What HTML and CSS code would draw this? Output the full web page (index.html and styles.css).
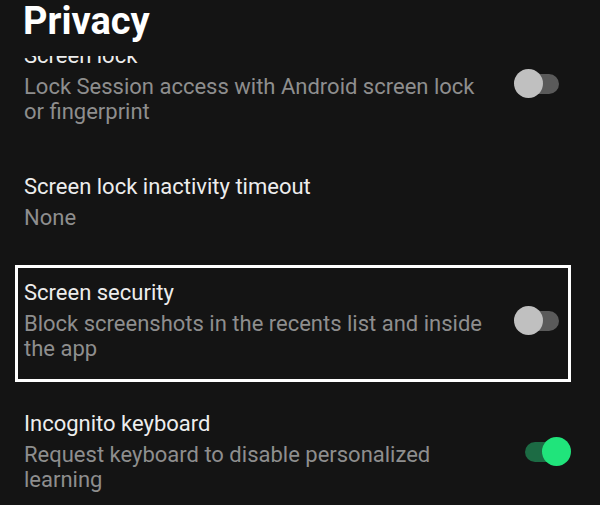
FILE: index.html
```html
<!DOCTYPE html>
<html lang="en">
<head>
    <meta charset="UTF-8">
    <meta name="viewport" content="width=device-width, initial-scale=1.0">
    <title>Privacy</title>
    <link rel="stylesheet" href="styles.css">
</head>
<body>
    <div class="screen">
        <header class="app-bar">
            <h1>Privacy</h1>
        </header>

        <div class="settings">
            <div class="setting">
                <div class="setting-text">
                    <div class="setting-title">Screen lock</div>
                    <div class="setting-summary">Lock Session access with Android screen lock or fingerprint</div>
                </div>
                <div class="switch"><span class="track"></span><span class="thumb"></span></div>
            </div>

            <div class="setting">
                <div class="setting-text">
                    <div class="setting-title">Screen lock inactivity timeout</div>
                    <div class="setting-summary">None</div>
                </div>
            </div>

            <div class="setting highlighted">
                <div class="setting-text">
                    <div class="setting-title">Screen security</div>
                    <div class="setting-summary">Block screenshots in the recents list and inside the app</div>
                </div>
                <div class="switch"><span class="track"></span><span class="thumb"></span></div>
            </div>

            <div class="setting">
                <div class="setting-text">
                    <div class="setting-title">Incognito keyboard</div>
                    <div class="setting-summary">Request keyboard to disable personalized learning</div>
                </div>
                <div class="switch on"><span class="track"></span><span class="thumb"></span></div>
            </div>
        </div>
    </div>
</body>
</html>
```

FILE: styles.css
```css
body {
    margin: 0;
    padding: 0;
    background-color: #141414;
    font-family: Roboto, "Liberation Sans", sans-serif;
    overflow: hidden;
}

.screen {
    position: relative;
    width: 600px;
    height: 505px;
    overflow: hidden;
}

/* header sits over the scrolled list */
.app-bar {
    position: absolute;
    top: 0;
    left: 0;
    right: 0;
    height: 56px;
    padding-top: 2px;
    box-sizing: border-box;
    background-color: #141414;
    z-index: 2;
}

.app-bar h1 {
    margin: 0;
    padding-left: 23px;
    font-size: 38px;
    line-height: 38px;
    font-weight: 700;
    color: #ffffff;
}

.settings {
    display: flex;
    flex-direction: column;
    padding-top: 18px;
}

.setting {
    position: relative;
    display: flex;
    align-items: center;
    gap: 28px;
    padding: 25px 29px 25px 24px;
}

.setting-text {
    flex: 1;
}

.setting-title {
    font-size: 22px;
    line-height: 26px;
    color: #ededed;
    margin-bottom: 5px;
}

.setting-summary {
    font-size: 22px;
    line-height: 25px;
    color: #8e8e8e;
}

.highlighted::after {
    content: "";
    position: absolute;
    top: 10px;
    bottom: 4px;
    left: 15px;
    right: 29px;
    border: 3px solid #ffffff;
}

.switch {
    position: relative;
    flex: none;
    width: 57px;
    height: 29px;
}

.track {
    position: absolute;
    left: 11px;
    top: 5px;
    width: 34px;
    height: 20px;
    border-radius: 10px;
    background-color: #5a5a5a;
}

.thumb {
    position: absolute;
    left: 0;
    top: 0;
    width: 29px;
    height: 29px;
    border-radius: 50%;
    background-color: #c0c0c0;
}

.switch.on .track {
    background-color: #1c6b44;
}

.switch.on .thumb {
    left: 28px;
    background-color: #20e47b;
}
```
